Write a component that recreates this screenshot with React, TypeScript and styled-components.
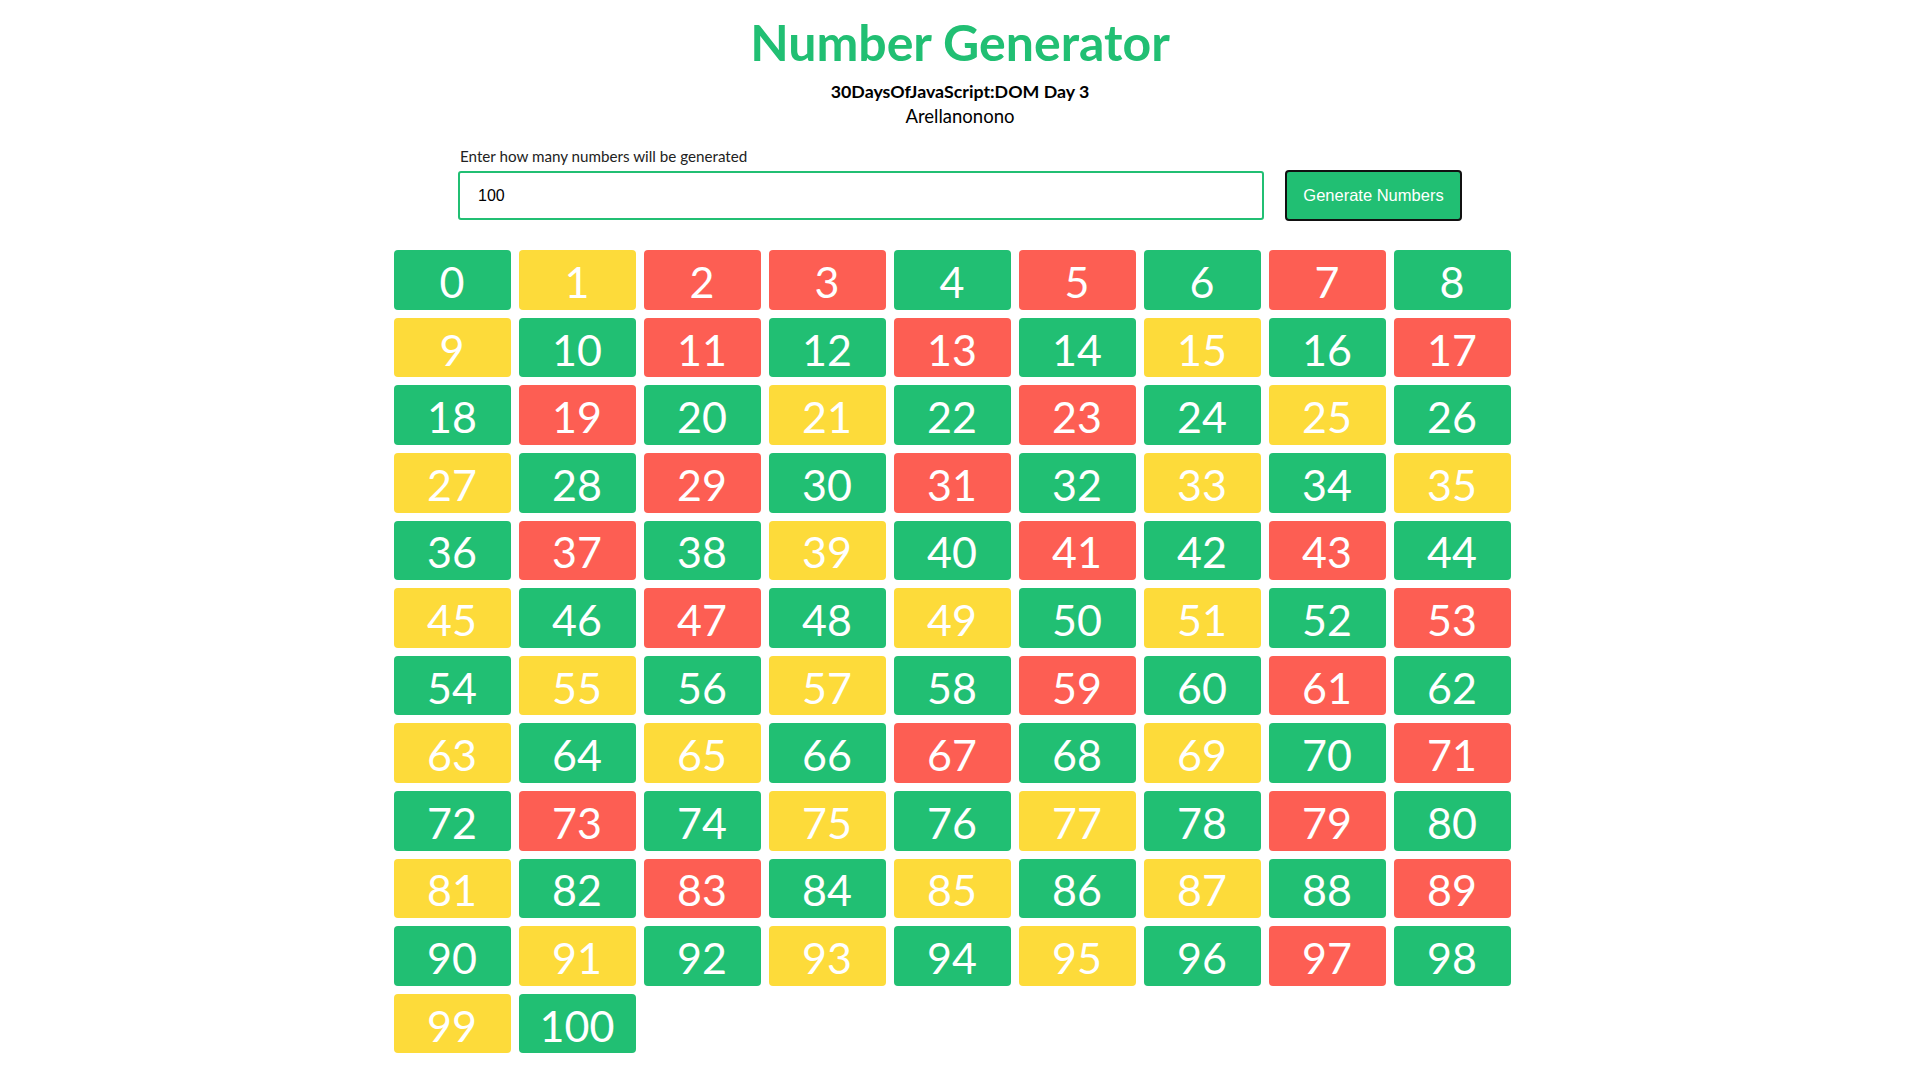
import React, { useState } from 'react';
import styled, { createGlobalStyle } from 'styled-components';

const GlobalStyle = createGlobalStyle`
  body {
    margin: 0;
    background: #fff;
    font-family: Lato, 'Open Sans', sans-serif;
  }
`;

const colors = {
  green: '#21bf73',
  yellow: '#fddb3a',
  red: '#fd5e53',
};

type Kind = 'even' | 'odd' | 'prime';

const isPrime = (n: number) => {
  if (n < 2) return false;
  for (let i = 2; i * i <= n; i++) {
    if (n % i === 0) return false;
  }
  return true;
};

const kindOf = (n: number): Kind => {
  if (isPrime(n)) return 'prime';
  return n % 2 === 0 ? 'even' : 'odd';
};

const Page = styled.div`
  display: flex;
  flex-direction: column;
  align-items: center;
  padding-top: 12px;
`;

const Title = styled.h1`
  margin: 0;
  font-size: 50px;
  line-height: 1.2;
  font-weight: 700;
  color: ${colors.green};
`;

const Subtitle = styled.h4`
  margin: 9px 0 0;
  font-size: 17.8px;
  line-height: 1.2;
  font-weight: 700;
  color: #000;
`;

const Author = styled.p`
  margin: 3px 0 0;
  font-size: 18.5px;
  line-height: 1.2;
  color: #000;
`;

const Form = styled.div`
  display: flex;
  flex-direction: column;
  width: 1004px;
  margin-top: 19px;
`;

const Label = styled.label`
  font-size: 15.2px;
  line-height: 1.2;
  color: #222;
  padding-left: 2px;
  margin-bottom: 5.5px;
`;

const InputRow = styled.div`
  display: flex;
  align-items: center;
  gap: 21px;
`;

const NumberInput = styled.input`
  box-sizing: border-box;
  width: 806px;
  height: 49px;
  border: 2px solid ${colors.green};
  border-radius: 3px;
  padding: 0 18px;
  font-family: 'Liberation Sans', Arial, sans-serif;
  font-size: 16px;
  color: #000;
  outline: none;
`;

const GenerateButton = styled.button`
  box-sizing: border-box;
  width: 177px;
  height: 51px;
  background: ${colors.green};
  border: 2px solid #111;
  border-radius: 4px;
  color: #fff;
  font-family: 'Liberation Sans', Arial, sans-serif;
  font-size: 16.5px;
  cursor: pointer;
`;

const GridWrap = styled.div`
  width: 1133px;
  margin-top: 29px;
  padding-bottom: 20px;
`;

const Grid = styled.div`
  display: grid;
  grid-template-columns: repeat(9, 117px);
  grid-auto-rows: 59.6px;
  column-gap: 8px;
  row-gap: 8px;
`;

const Cell = styled.div<{ $kind: Kind }>`
  display: flex;
  align-items: center;
  justify-content: center;
  border-radius: 4px;
  background: ${(p) =>
    p.$kind === 'prime' ? colors.red : p.$kind === 'even' ? colors.green : colors.yellow};
  color: #fff;
  font-size: 43px;
  line-height: 1;
  padding-top: 3px;
  box-sizing: border-box;
`;

const App = () => {
  const [value, setValue] = useState('100');
  const [count, setCount] = useState(100);
  const numbers = Array.from({ length: count + 1 }, (_, i) => i);

  return (
    <Page>
      <GlobalStyle />
      <Title>Number Generator</Title>
      <Subtitle>30DaysOfJavaScript:DOM Day 3</Subtitle>
      <Author>Arellanonono</Author>
      <Form>
        <Label htmlFor="amount">Enter how many numbers will be generated</Label>
        <InputRow>
          <NumberInput id="amount" value={value} onChange={(e) => setValue(e.target.value)} />
          <GenerateButton onClick={() => setCount(Math.max(0, parseInt(value, 10) || 0))}>
            Generate Numbers
          </GenerateButton>
        </InputRow>
      </Form>
      <GridWrap>
        <Grid>
          {numbers.map((n) => (
            <Cell key={n} $kind={kindOf(n)}>
              {n}
            </Cell>
          ))}
        </Grid>
      </GridWrap>
    </Page>
  );
};

export default App;
